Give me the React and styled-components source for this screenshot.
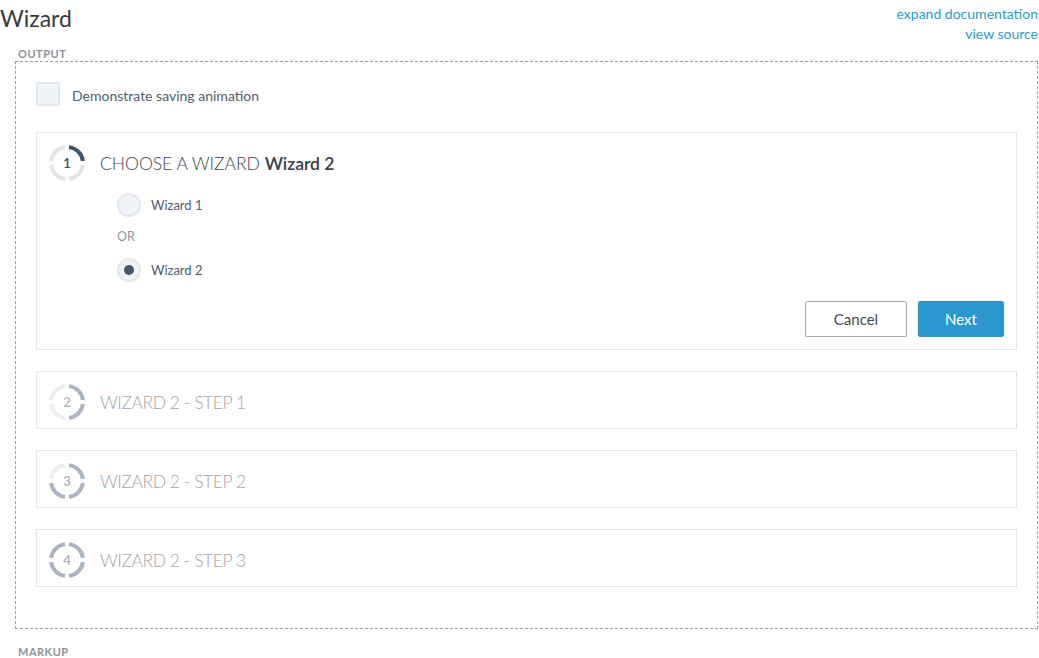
import React, { useState } from "react";
import styled, { createGlobalStyle } from "styled-components";

const GlobalStyle = createGlobalStyle`
  body {
    margin: 0;
    background: #fff;
    font-family: "Lato", "Liberation Sans", sans-serif;
  }
`;

const Page = styled.div`
  width: 1039px;
  padding: 0 1px 0 0;
  box-sizing: border-box;
`;

const Header = styled.div`
  display: flex;
  justify-content: space-between;
  align-items: flex-start;
`;

const Title = styled.h1`
  margin: 4px 0 0;
  font-size: 23px;
  font-weight: 400;
  color: #3a3a3a;
  line-height: 28px;
`;

const Links = styled.div`
  display: flex;
  flex-direction: column;
  align-items: flex-end;
  padding-top: 5px;
  gap: 2px;
`;

const DocLink = styled.a`
  font-size: 14px;
  line-height: 18px;
  color: #2b9bd3;
  text-decoration: none;
  cursor: pointer;
`;

const SectionLabel = styled.div`
  margin: ${(p) => p.$top || 0}px 0 0 18px;
  font-size: 11px;
  font-weight: 700;
  letter-spacing: 0.5px;
  color: #8c939b;
  line-height: 14px;
`;

const Output = styled.div`
  margin: 0 0 0 15px;
  border: 1px dashed #a0a0a0;
  padding: 20px 20px 41px;
  display: flex;
  flex-direction: column;
  gap: 21px;
`;

const CheckRow = styled.label`
  display: flex;
  align-items: center;
  gap: 12px;
  height: 24px;
  margin-bottom: 5px;
  font-size: 14px;
  color: #4f5d6e;
  cursor: pointer;
  span + & {
    margin: 0;
  }
`;

const CheckText = styled.span`
  padding-top: 2px;
`;

const Box = styled.span`
  width: 24px;
  height: 24px;
  box-sizing: border-box;
  border: 2px solid #e3e8ed;
  border-radius: 2px;
  background: #f0f4f8;
`;

const Card = styled.div`
  border: 1px solid #e6e6e6;
  padding: 13px 12px ${(p) => (p.$open ? 12 : 9)}px 12px;
`;

const StepHead = styled.div`
  display: flex;
  align-items: center;
  gap: 15px;
  height: 34px;
`;

const StepTitle = styled.div`
  font-size: 17.5px;
  font-weight: 300;
  letter-spacing: ${(p) => (p.$active ? 0 : -0.45)}px;
  color: ${(p) => (p.$active ? "#40464e" : "#a3a6a9")};
  b {
    font-weight: 600;
    color: #3a4047;
  }
`;

const Options = styled.div`
  padding: 13px 0 0 68px;
  display: flex;
  flex-direction: column;
`;

const RadioRow = styled.label`
  display: flex;
  align-items: center;
  gap: 10px;
  height: 24px;
  font-size: 13px;
  color: #4f5d6e;
  cursor: pointer;
`;

const Radio = styled.span`
  width: 24px;
  height: 24px;
  box-sizing: border-box;
  border-radius: 50%;
  border: 2px solid #e3e8ed;
  background: #f0f4f8;
  display: flex;
  align-items: center;
  justify-content: center;
  &::after {
    content: "";
    width: 10px;
    height: 10px;
    border-radius: 50%;
    background: ${(p) => (p.$checked ? "#45566d" : "transparent")};
  }
`;

const Or = styled.div`
  font-size: 12.5px;
  color: #8d9298;
  padding: 10px 0 11px;
  line-height: 20px;
`;

const Actions = styled.div`
  display: flex;
  justify-content: flex-end;
  gap: 11px;
  margin-top: 19px;
`;

const Button = styled.button`
  height: 36px;
  padding: 0;
  width: ${(p) => (p.$primary ? 86 : 102)}px;
  border-radius: 2px;
  font-family: inherit;
  font-size: 15px;
  cursor: pointer;
  border: 1px solid ${(p) => (p.$primary ? "#2a97cf" : "#a8a8a8")};
  background: ${(p) => (p.$primary ? "#2a97cf" : "#fff")};
  color: ${(p) => (p.$primary ? "#fff" : "#454a50")};
`;

const Ring = styled.svg`
  flex: none;
  display: block;
`;

const arc = (i) => {
  const r = 16;
  const c = 18;
  const gap = 7;
  const a0 = ((i * 90 + gap - 90) * Math.PI) / 180;
  const a1 = ((i * 90 + 90 - gap - 90) * Math.PI) / 180;
  const x0 = c + r * Math.cos(a0);
  const y0 = c + r * Math.sin(a0);
  const x1 = c + r * Math.cos(a1);
  const y1 = c + r * Math.sin(a1);
  return `M${x0.toFixed(2)} ${y0.toFixed(2)} A${r} ${r} 0 0 1 ${x1.toFixed(2)} ${y1.toFixed(2)}`;
};

const StepRing = ({ n, active }) => {
  const on = active ? "#3f5670" : "#aab5c1";
  const off = active ? "#e1e5e9" : "#eceef1";
  return (
    <Ring width="36" height="36" viewBox="0 0 36 36">
      {[0, 1, 2, 3].map((i) => (
        <path key={i} d={arc(i)} fill="none" stroke={i < n ? on : off} strokeWidth="4" />
      ))}
      <text
        x="18"
        y="22.5"
        textAnchor="middle"
        fontSize="13"
        fontWeight="600"
        fill={active ? "#3d4a5a" : "#a7b2be"}
        fontFamily="Lato, sans-serif"
      >
        {n}
      </text>
    </Ring>
  );
};

const steps = ["WIZARD 2 - STEP 1", "WIZARD 2 - STEP 2", "WIZARD 2 - STEP 3"];

export default function App() {
  const [choice, setChoice] = useState(2);
  return (
    <Page>
      <GlobalStyle />
      <Header>
        <Title>Wizard</Title>
        <Links>
          <DocLink>expand documentation</DocLink>
          <DocLink>view source</DocLink>
        </Links>
      </Header>
      <SectionLabel $top={4}>OUTPUT</SectionLabel>
      <Output>
        <CheckRow>
          <Box />
          <CheckText>Demonstrate saving animation</CheckText>
        </CheckRow>
        <Card $open>
          <StepHead>
            <StepRing n={1} active />
            <StepTitle $active>
              CHOOSE A WIZARD <b>Wizard 2</b>
            </StepTitle>
          </StepHead>
          <Options>
            <RadioRow onClick={() => setChoice(1)}>
              <Radio $checked={choice === 1} />
              Wizard 1
            </RadioRow>
            <Or>OR</Or>
            <RadioRow onClick={() => setChoice(2)}>
              <Radio $checked={choice === 2} />
              Wizard 2
            </RadioRow>
          </Options>
          <Actions>
            <Button>Cancel</Button>
            <Button $primary>Next</Button>
          </Actions>
        </Card>
        {steps.map((s, i) => (
          <Card key={s}>
            <StepHead>
              <StepRing n={i + 2} />
              <StepTitle>{s}</StepTitle>
            </StepHead>
          </Card>
        ))}
      </Output>
      <SectionLabel $top={16}>MARKUP</SectionLabel>
    </Page>
  );
}
